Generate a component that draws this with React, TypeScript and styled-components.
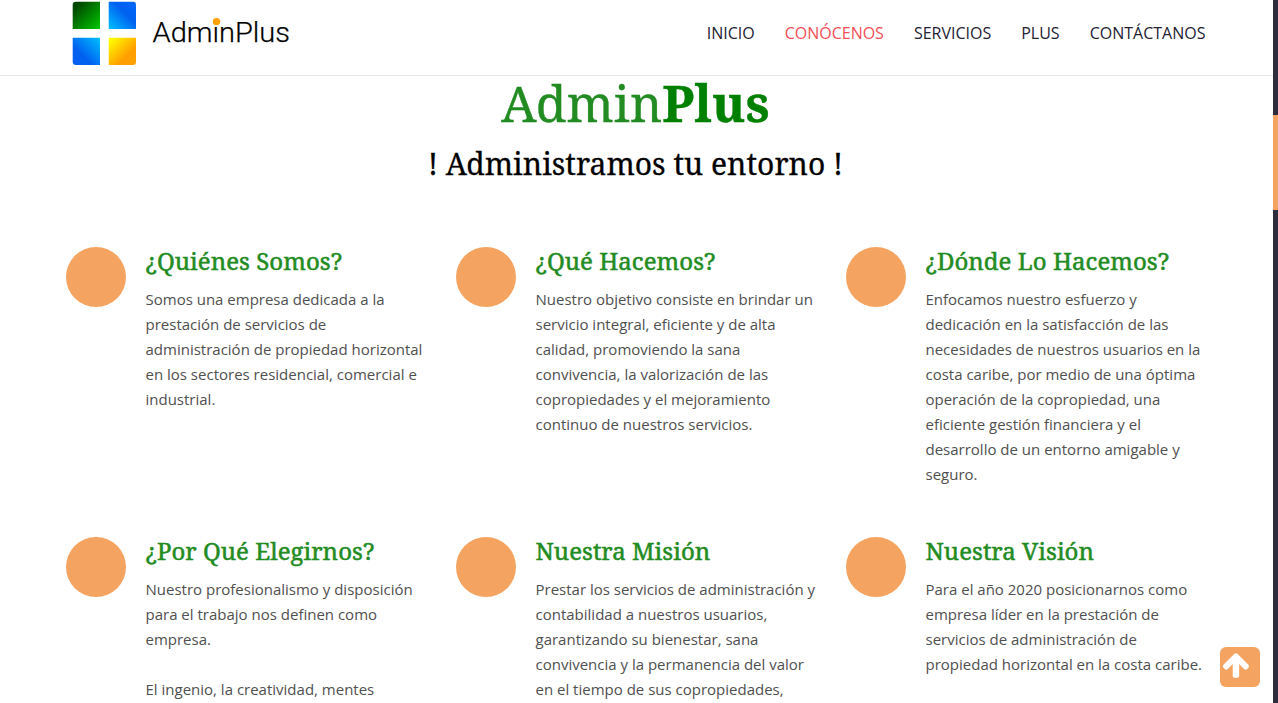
import React from 'react';
import styled, { createGlobalStyle } from 'styled-components';

const serif = `"Noto Serif", "Droid Serif", "DejaVu Serif Condensed", "DejaVu Serif", serif`;

const GlobalStyle = createGlobalStyle`
  * { box-sizing: border-box; }
  html, body { margin: 0; padding: 0; overflow: hidden; background: #fff; }
  body { font-family: "Open Sans", sans-serif; }
  h1, h2, h3, p { margin: 0; font-weight: 400; }
`;

const Page = styled.div`
  display: flex;
  width: 100%;
  height: 703px;
  overflow: hidden;
`;

const Content = styled.div`
  flex: 1;
  min-width: 0;
`;

const Header = styled.header`
  height: 76px;
  border-bottom: 1px solid #e7e7e7;
  display: flex;
  justify-content: space-between;
  padding: 0 67.6px 0 66px;
`;

const Logo = styled.svg`
  display: block;
  width: 230px;
  height: 70px;
`;

const Nav = styled.nav`
  display: flex;
  gap: 30px;
  padding-top: 21px;
`;

const NavLink = styled.a<{ $active?: boolean }>`
  font-size: 16px;
  line-height: 24px;
  color: ${(p) => (p.$active ? '#f24f55' : '#242234')};
`;

const Intro = styled.section`
  display: flex;
  flex-direction: column;
  align-items: center;
  height: 171px;
  padding-right: 2px;
  white-space: nowrap;
`;

const Title = styled.h1`
  font-family: ${serif};
  font-size: 50px;
  line-height: 54px;
  letter-spacing: 0.1px;
  color: #228b22;
  -webkit-text-stroke: 0.4px currentColor;
  b { color: #008000; }
`;

const Tagline = styled.h2`
  font-family: ${serif};
  font-size: 30px;
  line-height: 40px;
  margin-top: 14px;
  color: #000;
  letter-spacing: 0.03px;
  -webkit-text-stroke: 0.3px currentColor;
`;

const Grid = styled.main`
  display: grid;
  grid-template-columns: repeat(3, 360px);
  column-gap: 30px;
  row-gap: 50px;
  padding-left: 66px;
`;

const Item = styled.article`
  display: flex;
  gap: 19.5px;
`;

const Circle = styled.div`
  flex: none;
  width: 60px;
  height: 60px;
  border-radius: 50%;
  background: #f4a460;
`;

const ItemTitle = styled.h3`
  font-family: ${serif};
  font-size: 24px;
  line-height: 28px;
  margin-bottom: 12px;
  color: #228b22;
  letter-spacing: 0.04px;
  white-space: nowrap;
  -webkit-text-stroke: 0.5px currentColor;
`;

const ItemText = styled.p`
  font-size: 15px;
  line-height: 25px;
  color: #505050;
  white-space: pre;
`;

const Rail = styled.div`
  flex: none;
  width: 5px;
  background: #2e2d3d;
  padding-top: 115px;
`;

const Thumb = styled.div`
  height: 95px;
  background: #f4a460;
`;

const ToTop = styled.button`
  position: fixed;
  right: 18px;
  bottom: 16px;
  width: 40px;
  height: 40px;
  padding: 2.5px 0 0 2px;
  border: 0;
  border-radius: 6px;
  background: #f4a460;
  color: #fff;
  display: flex;
  align-items: flex-start;
  svg { width: 30px; height: 30px; }
`;

const nav = ['INICIO', 'CONÓCENOS', 'SERVICIOS', 'PLUS', 'CONTÁCTANOS'];

const items = [
  {
    title: '¿Quiénes Somos?',
    text: `Somos una empresa dedicada a la
prestación de servicios de
administración de propiedad horizontal
en los sectores residencial, comercial e
industrial.`,
  },
  {
    title: '¿Qué Hacemos?',
    text: `Nuestro objetivo consiste en brindar un
servicio integral, eficiente y de alta
calidad, promoviendo la sana
convivencia, la valorización de las
copropiedades y el mejoramiento
continuo de nuestros servicios.`,
  },
  {
    title: '¿Dónde Lo Hacemos?',
    text: `Enfocamos nuestro esfuerzo y
dedicación en la satisfacción de las
necesidades de nuestros usuarios en la
costa caribe, por medio de una óptima
operación de la copropiedad, una
eficiente gestión financiera y el
desarrollo de un entorno amigable y
seguro.`,
  },
  {
    title: '¿Por Qué Elegirnos?',
    text: `Nuestro profesionalismo y disposición
para el trabajo nos definen como
empresa.

El ingenio, la creatividad, mentes`,
  },
  {
    title: 'Nuestra Misión',
    text: `Prestar los servicios de administración y
contabilidad a nuestros usuarios,
garantizando su bienestar, sana
convivencia y la permanencia del valor
en el tiempo de sus copropiedades,`,
  },
  {
    title: 'Nuestra Visión',
    text: `Para el año 2020 posicionarnos como
empresa líder en la prestación de
servicios de administración de
propiedad horizontal en la costa caribe.`,
  },
];

function Brand() {
  return (
    <Logo viewBox="66 0 230 70">
      <defs>
        <linearGradient id="green" x1="0" y1="0" x2="1" y2="1">
          <stop offset="0.15" stopColor="#004800" />
          <stop offset="1" stopColor="#00c800" />
        </linearGradient>
        <linearGradient id="blueUp" x1="0" y1="1" x2="1" y2="0">
          <stop offset="0" stopColor="#00c0ff" />
          <stop offset="0.6" stopColor="#0060f0" />
          <stop offset="1" stopColor="#0068f8" />
        </linearGradient>
        <linearGradient id="blueDown" x1="1" y1="0" x2="0" y2="1">
          <stop offset="0" stopColor="#00c0ff" />
          <stop offset="0.65" stopColor="#0060f0" />
          <stop offset="1" stopColor="#0060f0" />
        </linearGradient>
        <linearGradient id="gold" x1="0" y1="0" x2="1" y2="1">
          <stop offset="0.1" stopColor="#fff800" />
          <stop offset="0.65" stopColor="#ffa000" />
          <stop offset="1" stopColor="#ffa000" />
        </linearGradient>
      </defs>
      <path d="M76 1.7H100V29H72.7V5Q72.7 1.7 76 1.7Z" fill="url(#green)" />
      <path d="M108.7 1.7H133Q136 1.7 136 5V29H108.7Z" fill="url(#blueUp)" />
      <path d="M72.7 37.7H100V65H76Q72.7 65 72.7 62Z" fill="url(#blueDown)" />
      <path d="M108.7 37.7H136V62Q136 65 133 65H108.7Z" fill="url(#gold)" />
      <text
        x="152.5"
        y="42.3"
        fontFamily="Roboto, sans-serif"
        fontWeight="300"
        fontSize="28.5"
        fill="#000"
        stroke="#000"
        strokeWidth="0.25"
        textLength="137.5"
        lengthAdjust="spacingAndGlyphs"
      >
        AdminPlus
      </text>
      <circle cx="216.5" cy="21.6" r="3.7" fill="#ff9f00" />
    </Logo>
  );
}

function ArrowUp() {
  return (
    <svg viewBox="0 0 1792 1792" fill="currentColor">
      <path d="M1611 971q0 51-37 90l-75 75q-38 38-91 38-54 0-90-38l-294-293v704q0 52-37.5 84.5t-90.5 32.5h-128q-53 0-90.5-32.5t-37.5-84.5v-704l-294 293q-36 38-90 38t-90-38l-75-75q-38-38-38-90 0-53 38-91l651-651q35-37 90-37 54 0 91 37l651 651q37 39 37 91z" />
    </svg>
  );
}

export default function App() {
  return (
    <>
      <GlobalStyle />
      <Page>
        <Content>
          <Header>
            <Brand />
            <Nav>
              {nav.map((label) => (
                <NavLink key={label} $active={label === 'CONÓCENOS'}>
                  {label}
                </NavLink>
              ))}
            </Nav>
          </Header>
          <Intro>
            <Title>
              Admin<b>Plus</b>
            </Title>
            <Tagline>! Administramos tu entorno !</Tagline>
          </Intro>
          <Grid>
            {items.map((item) => (
              <Item key={item.title}>
                <Circle />
                <div>
                  <ItemTitle>{item.title}</ItemTitle>
                  <ItemText>{item.text}</ItemText>
                </div>
              </Item>
            ))}
          </Grid>
        </Content>
        <Rail>
          <Thumb />
        </Rail>
      </Page>
      <ToTop aria-label="Subir">
        <ArrowUp />
      </ToTop>
    </>
  );
}
